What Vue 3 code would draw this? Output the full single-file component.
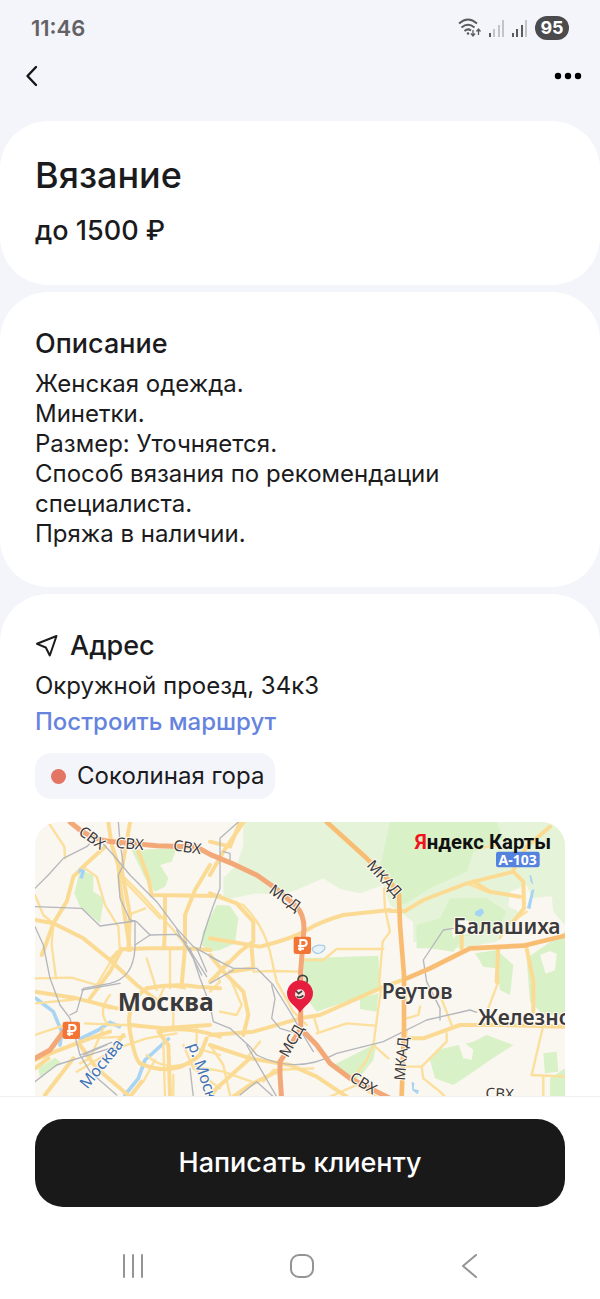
<template>
  <div class="screen">
    <!-- System status bar -->
    <div class="status">
      <time class="status__time">11:46</time>
      <div class="status__icons">
        <svg class="status__wifi" viewBox="0 0 24 20" aria-hidden="true">
          <g fill="none" stroke="#5b5b5e" stroke-width="2">
            <path d="M1 5.500Q10-2.500 19 5.500" />
            <path d="M3.500 9.500Q10 4 16.500 9.500" />
            <path d="M6.500 13Q10 10 13 12.500" />
          </g>
          <circle cx="10" cy="15.500" r="1.300" fill="#5b5b5e" />
          <path
            d="M15 12v6M13 15.500l2 2.500 2-2.500M20.500 17v-6M18.500 13.500l2-2.500 2 2.500"
            fill="none"
            stroke="#5b5b5e"
            stroke-width="1.300"
          />
        </svg>
        <svg
          v-for="level in signals"
          :key="level"
          class="status__signal"
          viewBox="0 0 16 17"
          aria-hidden="true"
        >
          <rect
            v-for="(bar, i) in signalBars"
            :key="i"
            :x="bar.x"
            :y="bar.y"
            width="2"
            :height="17 - bar.y"
            :fill="i < level ? '#5b5b5e' : '#c3c3c8'"
          />
        </svg>
        <span class="status__battery">95</span>
      </div>
    </div>

    <header class="header">
      <button class="header__button" type="button" aria-label="Назад">
        <svg width="14" height="22" viewBox="0 0 14 22" aria-hidden="true">
          <path
            d="M12 2 3.500 11 12 20"
            fill="none"
            stroke="#151517"
            stroke-width="2.400"
            stroke-linecap="round"
            stroke-linejoin="round"
          />
        </svg>
      </button>
      <button class="header__button" type="button" aria-label="Ещё">
        <svg width="28" height="8" viewBox="0 0 28 8" aria-hidden="true">
          <circle cx="4" cy="4" r="3.200" />
          <circle cx="14" cy="4" r="3.200" />
          <circle cx="24" cy="4" r="3.200" />
        </svg>
      </button>
    </header>

    <main class="content">
      <section class="card card--summary">
        <h1 class="card__headline">Вязание</h1>
        <p class="card__price">до 1500 ₽</p>
      </section>

      <section class="card card--description">
        <h2 class="card__title">Описание</h2>
        <p v-for="line in description" :key="line" class="card__text">{{ line }}</p>
      </section>

      <section class="card card--address">
        <h2 class="card__title card__title--icon">
          <svg width="24" height="24" viewBox="0 0 24 24" aria-hidden="true">
            <path
              d="M2 9.800 21.500 2 14.800 21.500 10.800 13.500Z"
              fill="none"
              stroke="#1b1b1d"
              stroke-width="2"
              stroke-linejoin="round"
            />
          </svg>
          Адрес
        </h2>
        <p class="card__text">Окружной проезд, 34к3</p>
        <a class="card__link" href="#route">Построить маршрут</a>
        <span class="metro"><i class="metro__dot" />Соколиная гора</span>

        <svg
          class="map"
          viewBox="15 21 1590 900"
          preserveAspectRatio="xMinYMin slice"
          role="img"
          aria-label="Карта"
        >
          <rect x="0" y="0" width="1620" height="930" fill="#faf6f0" />
          <path v-for="d in lightParks" :key="d" :d="d" fill="#e5f4d8" />
          <path v-for="d in parks" :key="d" :d="d" fill="#d9f1c6" />
          <path v-for="d in clearings" :key="d" :d="d" fill="#faf7f0" />

          <g fill="none" stroke-linejoin="round" stroke-linecap="round">
            <path v-for="d in rivers" :key="d" :d="d" stroke="#a9d5f3" stroke-width="11" />
            <path v-for="d in streets" :key="d" :d="d" stroke="#fbdf9a" stroke-width="7" />
            <path v-for="d in avenues" :key="d" :d="d" stroke="#fbdb93" stroke-width="12" />
            <path v-for="d in railways" :key="d" :d="d" stroke="#b4b7bc" stroke-width="4" />
            <path v-for="d in trunks" :key="d" :d="d" stroke="#f8bd72" stroke-width="14" />
            <path v-for="d in tollways" :key="d" :d="d" stroke="#f3a878" stroke-width="15" />
          </g>

          <path v-for="d in ponds" :key="d" :d="d" fill="#a4d3f5" />
          <path d="M846 402q12-16 36-10 10 10-12 22-16 6-24-12Z" fill="#e8f3f8" stroke="#a9cde8" stroke-width="4" />

          <rect x="1398" y="110" width="131" height="47" rx="7" fill="#5482df" />
          <text x="1463" y="149" class="map__shield">А-103</text>

          <g v-for="toll in tolls" :key="toll.x" :transform="`translate(${toll.x} ${toll.y})`">
            <rect x="-26" y="-26" width="52" height="52" rx="7" fill="#f27535" />
            <path
              d="M-6 17V-16H3q10 0 10 9t-10 9H-13M-13 10H5"
              fill="none"
              stroke="#fff"
              stroke-width="6"
            />
          </g>

          <text
            v-for="label in mapLabels"
            :key="label.text + label.x"
            :class="`map__${label.kind}`"
            :transform="`translate(${label.x} ${label.y}) rotate(${label.angle || 0})`"
          >{{ label.text }}</text>

          <text x="1154" y="103" class="map__brand"><tspan fill="#f0141e">Я</tspan>ндекс Карты</text>

          <!-- Client location -->
          <circle cx="818" cy="495" r="14" fill="none" stroke="#444" stroke-width="5" />
          <path
            d="M810 593C799 574 771 562 771 535A39 39 0 0 1 849 535C849 562 821 574 810 593Z"
            fill="#e71d3f"
          />
          <circle cx="810" cy="538" r="15" fill="#f4e4df" />
          <path d="M798 528l8 8 10-8M800 544q10 8 20-3" fill="none" stroke="#453a3c" stroke-width="5" />
        </svg>
      </section>
    </main>

    <footer class="actions">
      <button class="actions__write" type="button">Написать клиенту</button>
    </footer>

    <!-- Android navigation -->
    <nav class="navigation" aria-label="Системная навигация">
      <button type="button" aria-label="Недавние приложения">
        <svg width="26" height="28" viewBox="0 0 26 28" aria-hidden="true">
          <path d="M4 3v22M13 3v22M22 3v22" />
        </svg>
      </button>
      <button type="button" aria-label="Главный экран">
        <svg width="26" height="28" viewBox="0 0 26 28" aria-hidden="true">
          <rect x="2" y="3" width="22" height="22" rx="8" />
        </svg>
      </button>
      <button type="button" aria-label="Назад">
        <svg width="26" height="28" viewBox="0 0 26 28" aria-hidden="true">
          <path d="M19 3 6 14 19 25" />
        </svg>
      </button>
    </nav>
  </div>
</template>

<script setup>
const signals = [1, 3];
const signalBars = [
  { x: 0, y: 13 },
  { x: 4, y: 9 },
  { x: 9, y: 5 },
  { x: 13, y: 0 },
];

const description = [
  'Женская одежда.',
  'Минетки.',
  'Размер: Уточняется.',
  'Способ вязания по рекомендации специалиста.',
  'Пряжа в наличии.',
];

// ---------------------------------------------------------------------------
// Map geometry, three map units per CSS pixel
// ---------------------------------------------------------------------------

const lightParks = [
  'M640 21H1605V240L1500 250 1440 300 1340 310 1290 360 1220 390 1150 380 1150 320 1080 270 1060 210 990 235 930 222 880 190 800 225 750 240 680 235 580 255 580 190 620 150 640 90Z',
  'M1150 320L1260 240 1420 230 1470 300 1400 380 1290 400 1190 400Z',
  'M1555 21H1605V330L1570 290 1560 190 1590 130Z',
];

const parks = [
  'M305 105L440 100 425 140 390 150 415 190 405 215 375 230 345 190Z',
  'M150 165L190 180 190 230 222 250 210 325 150 275 133 235Z',
  'M518 350L560 270 600 272 625 310 615 385 570 405 540 410 515 390Z',
  'M820 430L1045 422 1050 520 990 545 860 590 822 540Z',
  'M990 550L1045 535 1040 590 990 582Z',
  'M900 755L1040 685 1030 735 990 785 965 800Z',
  'M1080 21H1400L1420 70 1330 110 1310 170 1200 220 1120 270 1085 240 1050 160Z',
  'M1160 330L1230 310 1260 250 1370 250 1430 290 1400 350 1300 365 1270 410 1200 400 1160 400Z',
  'M1335 415L1400 405 1450 450 1440 540 1410 525 1400 460 1360 455Z',
  'M1490 430L1605 350V600H1540L1500 560Z',
  'M1220 705L1330 680 1370 660 1450 690 1380 735 1330 770 1270 810 1215 790 1200 735Z',
  'M1540 715L1580 710 1585 770 1545 775Z',
  'M25 760L75 728 95 745 30 785Z',
  'M1560 790L1605 760V930H1560Z',
];

const clearings = [
  'M1265 340l20-30 30 8 20 25-30 16-20-8-15 20Z',
  'M1440 230l50-20 20 50-40 30-35-15Z',
  'M1270 655l20-5 10 30 30 25-5 30-25-5-15-45-20-5Z',
  'M1530 420l30-12 20 8-5 50-28 10Z',
];

const rivers = [
  'M18 550L70 590 95 650 90 690',
  'M150 672L205 645 240 622 268 635',
  'M285 840L325 790 345 735 415 672',
];

const streets = [
  'M55 22L103 95 105 130',
  'M15 240L40 300 70 325',
  'M70 325L65 390 78 490M15 490L125 488 200 510',
  'M15 565L120 555 150 550M130 545L240 580',
  'M165 160L200 185 225 270 265 335 270 410',
  'M265 170L340 245 430 345 470 395',
  'M280 195L390 310M295 300L345 280',
  'M420 400V520M220 640L180 730 150 745',
  'M15 660L120 625M165 625L270 630M170 670L285 665',
  'M140 770L260 700 350 670 440 655',
  'M240 540Q200 590 235 630L320 630',
  'M380 570L405 510 465 520M430 570V640',
  'M350 720Q400 770 470 745L540 765',
  'M400 685L405 845M430 780V840M375 735L340 800',
  'M460 690L490 760 570 820M500 640V700L570 720',
  'M540 240L640 270Q700 330 720 410L740 500 790 590 830 630',
  'M540 530L570 500 560 480 590 440',
  'M570 590L620 600 635 570 605 500M670 470L730 468 810 470',
  'M540 690L580 750 600 840M650 730L690 680',
  'M815 435H880L920 402 1060 402',
  'M1062 220L1065 280 1080 350 1058 380 1048 500 1052 530 1030 690 1010 735 970 790',
  'M850 600L865 650M860 655L950 625 1035 632M1030 690L1075 730',
  'M1296 350V395M1350 100L1400 90',
  'M1310 205L1370 230 1470 245M1400 400L1405 500 1375 580M1410 370L1430 330 1490 290',
  'M1130 610L1165 600 1170 575M1130 650L1110 760M1130 755L1175 755',
  'M1230 540L1265 630M1250 655V680L1175 755 1180 790 1230 830 1245 845',
  'M1540 630L1505 780 1605 785M1540 785V845',
  'M900 845L980 810 1040 845M530 760L580 770 665 800M700 800L730 765 850 760',
  'M380 525L350 430M200 510L260 410',
];

const avenues = [
  'M15 315L70 325 160 370 240 435 320 510 380 555',
  'M225 95L165 150 130 185 110 260 70 325 45 395 35 420',
  'M235 22L245 90 265 150 270 210 300 405',
  'M300 22L275 165 300 300 295 405',
  'M325 110L355 190 365 240 570 243',
  'M405 245V345L402 400M540 150L495 225 465 300 465 400',
  'M240 435L275 403 360 400 465 400 540 405',
  'M465 400L455 510M275 403L240 470 180 550',
  'M15 530L140 550 260 580',
  'M350 520Q430 505 500 515L570 520',
  'M350 520Q285 565 300 650T330 745',
  'M300 630L400 640 540 630M390 650Q460 630 570 665',
  'M330 745Q430 790 510 720L530 670',
  'M385 650L415 690 420 840M335 800L300 845',
  'M15 735L75 710 180 670 240 650',
  'M150 690L200 760 300 845M45 840L130 730',
  'M15 760L55 730M280 660L240 710',
  'M640 22L580 110 540 180M540 80L600 95 630 22',
  'M540 370L690 395Q790 370 830 345T940 300L1080 285',
  'M540 235L620 265 670 320 670 380 630 410 600 440 560 480 540 500',
  'M540 420L580 470 640 530 655 600 640 660M600 470L670 460 665 400',
  'M540 660L670 650 810 610 870 600 1050 520 1130 490',
  'M540 690L660 730 780 750 860 785 950 845',
  'M660 730L560 820 540 845M740 770L660 810 610 845',
  'M1080 288H1125L1180 255 1310 205 1450 170 1480 200 1482 280 1450 320',
  'M1330 200L1380 230 1470 245M1450 165L1490 95 1560 35',
  'M1490 400L1510 500 1510 590M1405 395L1400 500M1295 400V345',
  'M1130 670H1180L1290 630 1420 630 1605 635',
];

const trunks = [
  'M890 21L1010 130 1080 200 1107 240 1110 330 1122 480 1122 640 1112 930',
  'M1130 490L1200 460 1320 400 1480 392 1605 362',
];

const tollways = [
  'M120 21L150 45Q200 80 270 82L380 92 500 96 540 118Q610 145 680 180L740 222 800 275Q822 300 822 340L812 470V640L860 690 900 745 960 790 1080 850',
  'M812 640L770 710 750 740V780L760 930',
  'M100 650L60 705 15 730',
];

const railways = [
  'M15 220L55 180 100 130 170 95 200 65 250 120 300 180 380 260 440 340 490 395 570 440',
  'M265 21L270 80 280 150 265 180 270 250 300 315 320 320 360 360 440 358 470 385',
  'M15 275L155 280 210 333 315 318 315 400Q310 490 240 505L160 520 140 590 120 600',
  'M155 525L270 505M315 390L360 360M15 335L40 390 60 490 90 570 120 610 150 720 180 770 260 840',
  'M440 345L490 430 515 480M470 390L530 485M500 400L530 470',
  'M510 400Q530 320 570 220L570 70 625 21M480 400L510 490 540 570 550 620 600 640 660 695 680 720Q800 780 920 715L1060 680 1190 615 1320 585 1340 592',
  'M540 425L610 460 680 460 730 510 780 590 820 660 850 710',
  'M540 505L610 465M725 510L735 550 725 610 750 640 800 655',
  'M630 840L680 800 730 845M650 690L740 845M15 800L80 750 240 700M150 720L245 682',
  'M580 110L600 115 600 145M1270 340L1240 345 1180 435 1190 500 1230 580 1230 615',
  'M480 760L490 845M160 720L230 690',
];

const ponds = [
  'M148 160l18 6-8 26-10-4 6-16-10 2Z',
  'M1335 290l20-10 8 12-12 14-16-6Z',
  'M1505 225l8-2-12 60-10-4Z',
  'M1498 180l6 2 6 28-8-10Z',
  'M1145 800l8 4-2 18 16 4-4 12-16-12Z',
];

const tolls = [
  { x: 124, y: 646 },
  { x: 817, y: 391 },
];

const mapLabels = [
  { text: 'Москва', x: 263, y: 587, kind: 'capital' },
  { text: 'Реутов', x: 1055, y: 552, kind: 'city' },
  { text: 'Балашиха', x: 1270, y: 356, kind: 'city' },
  { text: 'Железно', x: 1344, y: 630, kind: 'city' },
  { text: 'СВХ', x: 143, y: 56, angle: 36, kind: 'road' },
  { text: 'СВХ', x: 256, y: 98, angle: 5, kind: 'road' },
  { text: 'СВХ', x: 428, y: 106, angle: 8, kind: 'road' },
  { text: 'МСД', x: 714, y: 232, angle: 35, kind: 'road' },
  { text: 'МКАД', x: 1008, y: 152, angle: 48, kind: 'road' },
  { text: 'МСД', x: 773, y: 730, angle: -61, kind: 'road' },
  { text: 'СВХ', x: 956, y: 796, angle: 31, kind: 'road' },
  { text: 'МКАД', x: 1124, y: 798, angle: -85, kind: 'road' },
  { text: 'СВХ', x: 1366, y: 850, angle: 3, kind: 'road' },
  { text: 'Москва', x: 172, y: 824, angle: -51, kind: 'river' },
  { text: 'р. Моск', x: 474, y: 690, angle: 71, kind: 'river' },
];
</script>

<style>
html,
body {
  margin: 0;
  background: #f4f5fb;
}
</style>

<style scoped>
.screen {
  display: flex;
  flex-direction: column;
  height: 100vh;
  color: #1b1b1d;
  font-family: Inter, "Noto Sans", sans-serif;
  background: #f4f5fb;
}

h1,
h2,
p {
  margin: 0;
}

button {
  padding: 0;
  border: 0;
  font: inherit;
  background: transparent;
  cursor: pointer;
}

svg {
  display: block;
}

/* Status bar */
.status {
  display: flex;
  align-items: center;
  justify-content: space-between;
  flex: none;
  height: 56px;
  padding: 0 31px;
}

.status__time {
  color: #626265;
  font-size: 22px;
  font-weight: 600;
}

.status__icons {
  display: flex;
  align-items: center;
  gap: 7px;
}

.status__wifi {
  width: 24px;
  height: 20px;
}

.status__signal {
  width: 16px;
  height: 17px;
}

.status__battery {
  width: 34px;
  border-radius: 12px;
  color: #fff;
  font-size: 18px;
  font-weight: 700;
  line-height: 24px;
  text-align: center;
  background: #4b4b4e;
}

/* Page header */
.header {
  display: flex;
  align-items: center;
  justify-content: space-between;
  flex: none;
  height: 40px;
  margin-bottom: 25px;
  padding: 0 18px 0 24px;
}

/* Cards */
.content {
  display: flex;
  flex: 1;
  flex-direction: column;
  gap: 7px;
  min-height: 0;
  overflow-y: auto;
  scrollbar-width: none;
}

.card {
  flex: none;
  padding: 36px 35px;
  border-radius: 48px;
  background: #fff;
}

.card--description {
  padding-bottom: 38px;
}

.card__headline {
  font-size: 36px;
  font-weight: 500;
  line-height: 36px;
}

.card__price {
  margin-top: 20px;
  font-size: 27px;
  font-weight: 500;
  line-height: 36px;
}

.card__title {
  margin-bottom: 9px;
  font-size: 27px;
  font-weight: 500;
  line-height: 32px;
}

.card__title--icon {
  display: flex;
  align-items: center;
  gap: 11px;
}

.card__text {
  font-size: 24px;
  line-height: 30px;
}

.card--address {
  display: flex;
  flex-direction: column;
  align-items: flex-start;
}

.card__link {
  margin-top: 6px;
  color: #6683de;
  font-size: 24px;
  font-weight: 500;
  line-height: 30px;
  text-decoration: none;
}

.metro {
  display: flex;
  align-items: center;
  gap: 11px;
  margin: 16px 0 23px;
  padding: 0 11px 0 16px;
  border-radius: 16px;
  font-size: 24px;
  line-height: 46px;
  background: #f4f5fb;
}

.metro__dot {
  width: 15px;
  height: 15px;
  border-radius: 50%;
  background: #e37564;
}

/* Map */
.map {
  width: 100%;
  height: 300px;
  border-radius: 24px;
}

.map text {
  font-family: "Noto Sans", sans-serif;
}

.map__capital,
.map__city,
.map__road,
.map__river {
  fill: #3b3b3d;
  stroke: #fffaf2;
  stroke-width: 6px;
  stroke-linejoin: round;
  paint-order: stroke;
}

.map__capital {
  font-size: 74px;
  font-weight: 700;
}

.map__city {
  font-size: 63px;
  font-weight: 600;
}

.map__road {
  font-size: 45px;
}

.map__river {
  fill: #3d72b8;
  font-size: 48px;
}

.map__shield {
  fill: #fff;
  font-size: 42px;
  font-weight: 700;
  text-anchor: middle;
}

.map .map__brand {
  fill: #111;
  font-family: Roboto, sans-serif;
  font-size: 61px;
  font-weight: 700;
}

/* Bottom action */
.actions {
  flex: none;
  padding: 22px 35px 26px;
  border-top: 1px solid #f0f0f2;
  background: #fff;
}

.actions__write {
  width: 100%;
  border-radius: 28px;
  color: #fff;
  font-size: 27px;
  font-weight: 500;
  line-height: 88px;
  background: #191919;
}

.navigation {
  display: flex;
  justify-content: space-between;
  flex: none;
  padding: 19px 117px 19px 120px;
  background: #fff;
}

.navigation svg {
  fill: none;
  stroke: #949497;
  stroke-width: 2;
  stroke-linecap: round;
  stroke-linejoin: round;
}
</style>
